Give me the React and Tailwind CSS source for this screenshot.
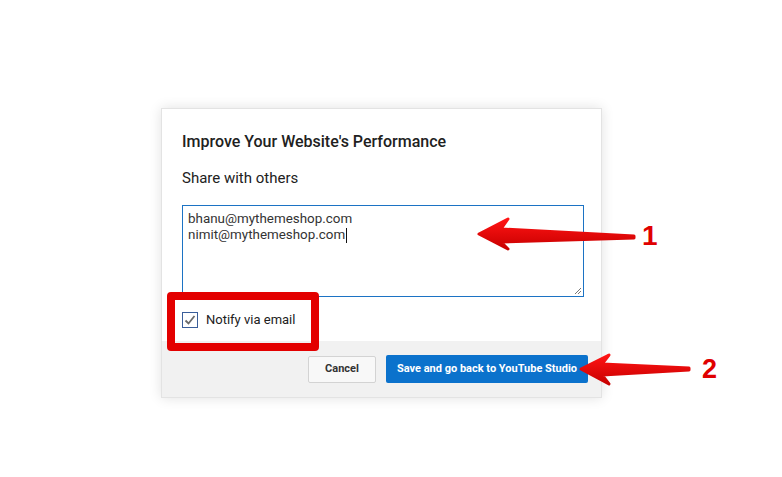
import React from 'react';

const font = { fontFamily: 'Roboto, "Noto Sans", Arial, sans-serif' };

const Arrows = () => (
  <svg className="absolute left-0 top-0 pointer-events-none" width="782" height="477" viewBox="0 0 782 477">
    <defs>
      <linearGradient id="redGrad" x1="0" y1="0" x2="0" y2="1">
        <stop offset="0" stopColor="#ff1414" />
        <stop offset="1" stopColor="#c80000" />
      </linearGradient>
    </defs>
    {/* arrow 1 */}
    <path
      d="M479 234 L508 219 L501 229 L634 236 L634 238 L501 242 L508 249 Z"
      fill="url(#redGrad)"
      stroke="url(#redGrad)"
      strokeWidth="3"
      strokeLinejoin="round"
    />
    {/* arrow 2 */}
    <path
      d="M581 369 L609 355 L602 364 L689 368 L689 370 L602 375 L609 384 Z"
      fill="url(#redGrad)"
      stroke="url(#redGrad)"
      strokeWidth="3"
      strokeLinejoin="round"
    />
  </svg>
);

export default function App() {
  return (
    <div className="relative w-[782px] h-[477px] bg-white overflow-hidden" style={font}>
      <div className="pt-[108px] pl-[161px]">
        <div className="relative w-[441px] h-[290px] bg-white border border-[#e3e3e3] shadow-[0_0_12px_rgba(0,0,0,0.12)] flex flex-col">
          {/* body */}
          <div className="flex-1 pl-[20px] pt-[23px]">
            <h2 className="text-[16px] leading-[20px] font-medium text-[#212121]">Improve Your Website's Performance</h2>
            <p className="mt-[17px] text-[15px] leading-[18px] text-[#212121]">Share with others</p>
            <div className="relative mt-[18px] w-[402px] h-[92px] border border-[#1c73c4] px-[5px] pt-[5px] text-[13.4px] leading-[16px] text-[#333]">
              <div>bhanu@mythemeshop.com</div>
              <div className="flex items-center">
                nimit@mythemeshop.com<span className="inline-block w-px h-[15px] bg-[#111] ml-px" />
              </div>
              <svg className="absolute right-[1px] bottom-[1px]" width="8" height="8" viewBox="0 0 8 8">
                <path d="M1 7 L7 1 M4 7 L7 4" stroke="#777" strokeWidth="1" />
              </svg>
            </div>
            <label className="mt-[15px] flex items-center gap-[8px] text-[13px] leading-[16px] text-[#212121]">
              <span className="w-[16px] h-[16px] border border-[#3a5e9a] bg-white flex items-center justify-center">
                <svg width="14" height="14" viewBox="0 0 14 14">
                  <path d="M2.5 7.5 L5.5 10.5 L11.5 3" fill="none" stroke="#6b6b6b" strokeWidth="1.8" />
                </svg>
              </span>
              Notify via email
            </label>
          </div>
          {/* footer */}
          <div className="h-[56px] bg-[#f1f1f1] flex items-center justify-end gap-[10px] pr-[13px]">
            <button className="w-[68px] h-[27px] bg-[#f8f8f8] border border-[#d3d3d3] rounded-[2px] text-[11px] font-bold text-[#333]">
              Cancel
            </button>
            <button className="w-[202px] h-[28px] bg-[#0b72cc] rounded-[2px] text-[11px] font-bold text-white">
              Save and go back to YouTube Studio
            </button>
          </div>
          {/* annotation box */}
          <div className="absolute left-[5px] top-[183px] w-[152px] h-[59px] border-[8px] border-[#e30000] rounded-[4px] pointer-events-none" />
        </div>
      </div>
      <Arrows />
      <span className="absolute left-[642px] top-[220px] text-[28px] leading-[32px] font-bold text-[#e00000]" style={{ fontFamily: '"Liberation Sans", Arial, sans-serif' }}>1</span>
      <span className="absolute left-[702px] top-[353px] text-[27px] leading-[32px] font-bold text-[#e00000]" style={{ fontFamily: '"Liberation Sans", Arial, sans-serif' }}>2</span>
    </div>
  );
}
